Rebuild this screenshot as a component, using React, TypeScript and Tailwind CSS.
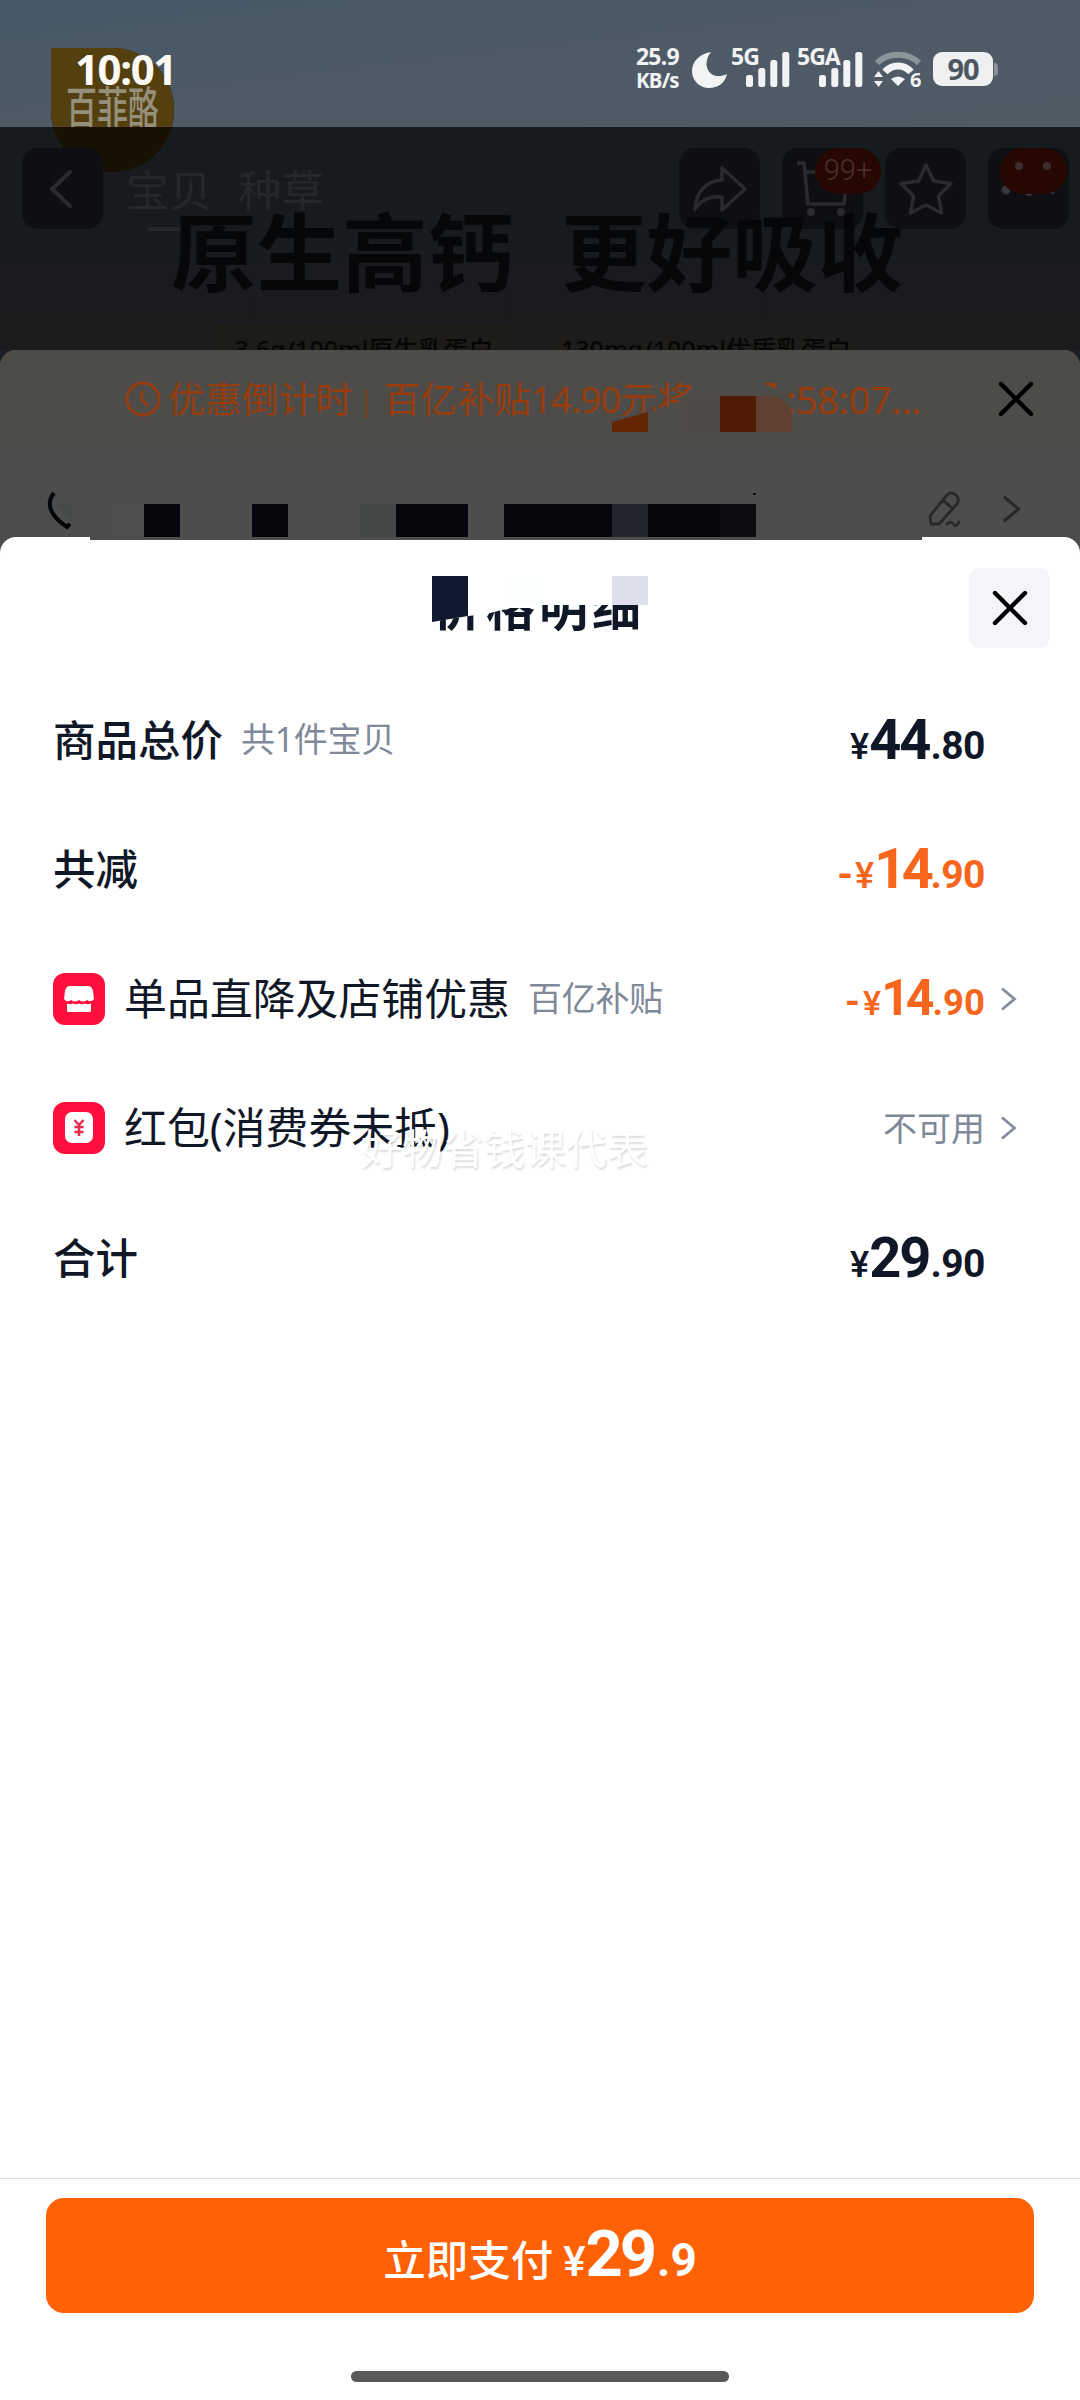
import type { ReactNode } from "react";

const cjk = "font-['Noto_Sans','Noto_Sans_CJK_SC',sans-serif]";
const num = "font-['Roboto','Noto_Sans_CJK_SC',sans-serif]";

function Chevron({ className }: { className?: string }) {
  return (
    <svg viewBox="0 0 16 24" className={className} fill="none" stroke="currentColor" strokeWidth="2.8">
      <path d="M1.5 1.5 14 12 1.5 22.5" />
    </svg>
  );
}

function Cross() {
  return (
    <svg viewBox="0 0 36 36" className="size-9" fill="none" stroke="#000" strokeWidth="4.4" strokeLinecap="round">
      <path d="M3 3 33 33M33 3 3 33" />
    </svg>
  );
}

function Signal() {
  return (
    <svg viewBox="0 0 44 36" className="h-9 w-11" fill="#f1f3f5">
      <rect x="0" y="24" width="7" height="12" rx="2.5" />
      <rect x="12.3" y="17" width="7" height="19" rx="2.5" />
      <rect x="24.3" y="9" width="7" height="27" rx="2.5" />
      <rect x="36.3" y="1" width="7" height="35" rx="2.5" />
    </svg>
  );
}

function StatusBar() {
  return (
    <div className="relative h-[127px] bg-linear-to-br from-[#455866] via-[#4e5a66] to-[#505b66] text-[#f1f3f5]">
      <div className={`${cjk} absolute top-[44px] left-[636px] text-[23px] leading-[24px] font-bold tracking-[-0.8px]`}>
        <div>25.9</div>
        <div className="text-[20.5px]">KB/s</div>
      </div>
      <svg viewBox="0 0 36 36" className="absolute top-[52px] left-[692px] size-[36px]" fill="currentColor">
        <path d="M19 0C7 2 0 10 0 19c0 10 8 17 17 17 9 0 16-5 18-14-8 4-16 2-19-4-3-6-1-13 3-18z" />
      </svg>
      <span className={`${cjk} absolute top-[44px] left-[731px] text-[23px] leading-6 font-bold tracking-[-1px]`}>5G</span>
      <div className="absolute top-[51px] left-[746px]">
        <Signal />
      </div>
      <span className={`${cjk} absolute top-[44px] left-[797px] text-[23px] leading-6 font-bold tracking-[-1px]`}>5GA</span>
      <div className="absolute top-[51px] left-[819px]">
        <Signal />
      </div>
      <svg viewBox="0 0 48 38" className="absolute top-[51px] left-[873px] h-[38px] w-12" fill="none">
        <path d="M4 12C15 1 35 1 46 12" stroke="#8b939b" strokeWidth="6" />
        <path d="M12 21C19 13 31 13 38 21" stroke="#f1f3f5" strokeWidth="7" />
        <path d="M18 28q7-5 14 0l-7 7zM1 26l4.500-6 4.500 6zM1 30l4.500 6 4.500-6z" fill="#f1f3f5" />
      </svg>
      <span className={`${cjk} absolute top-[70px] left-[910px] text-[20px] leading-5 font-bold`}>6</span>
      <div className={`${cjk} absolute top-[52px] left-[933px] flex h-[34px] w-[60px] items-center justify-center rounded-[9px] bg-[#eef0f1] text-[29px] font-bold tracking-[-1px] text-[#4c5761]`}>
        90
      </div>
      <div className="absolute top-[63px] left-[994px] h-[13px] w-[4px] rounded-r bg-[#8b939b]" />
    </div>
  );
}

function NavButton({ children }: { children?: ReactNode }) {
  return (
    <div className="relative flex h-[81px] w-[81px] items-center justify-center rounded-[16px] bg-[#0d0f12] text-[#2a2b2d]">
      {children}
    </div>
  );
}

function Hero() {
  return (
    <div className="relative h-[350px] overflow-hidden bg-linear-to-b from-[#161b1e] from-40% to-[#1b1b1d]">
      <StatusBar />

      {/* brand badge, split between the status bar and the dimmed area */}
      <div className="absolute top-[48px] left-[51px] h-[124px] w-[123px] overflow-hidden rounded-[62px] rounded-tl-none bg-[#181003]">
        <div className="h-[79px] bg-[#54400e]" />
      </div>
      <div className={`${cjk} absolute top-[80px] left-[66px] h-[47px] overflow-hidden text-[31px] leading-[38px] font-medium text-[#968f7c]`}>
        <span className="inline-block origin-top scale-y-[1.45]">百菲酪</span>
      </div>
      <div className={`${cjk} absolute top-[45px] left-[75px] text-[42px] leading-[48px] font-bold tracking-[-1.4px] text-[#fdfaf5]`}>
        10:01
      </div>

      <div className="relative flex items-start pt-[21px] pr-[11px] pl-[22px]">
        <NavButton>
          <svg viewBox="0 0 24 38" className="mr-1 h-[38px] w-6" fill="none" stroke="currentColor" strokeWidth="4" strokeLinecap="round">
            <path d="M21 2 3 19 21 36" />
          </svg>
        </NavButton>
        <div className={`${cjk} mt-[13px] ml-[23px] flex gap-[26px] text-[43px] leading-[60px] text-[#25272a]`}>
          <div className="flex flex-col items-center">
            <span>宝贝</span>
            <span className="mt-[6px] h-1 w-[42px] bg-[#25272a]" />
          </div>
          <span>种草</span>
        </div>
        <div className="ml-auto flex gap-[22px]">
          <NavButton>
            <svg viewBox="0 0 54 46" className="h-[46px] w-[54px]" fill="none" stroke="currentColor" strokeWidth="3.500" strokeLinejoin="round">
              <path d="M29 2 52 23 29 44V31C17 30 9 33 2 43 3 27 12 15 29 14Z" />
            </svg>
          </NavButton>
          <NavButton>
            <svg viewBox="0 0 52 56" className="h-[56px] w-[52px]" fill="none" stroke="currentColor" strokeWidth="3.500" strokeLinejoin="round">
              <path d="M0 2h7l4 41h36l4-32H8" />
              <circle cx="14" cy="51" r="4" fill="currentColor" stroke="none" />
              <circle cx="44" cy="51" r="4" fill="currentColor" stroke="none" />
            </svg>
            <span className={`${num} absolute top-0 left-[33px] flex h-[46px] w-[66px] items-center justify-center rounded-full bg-[#260701] text-[29px] font-light text-[#4a3029]`}>
              99+
            </span>
          </NavButton>
          <NavButton>
            <svg viewBox="0 0 54 52" className="h-[52px] w-[54px]" fill="none" stroke="currentColor" strokeWidth="3.500" strokeLinejoin="round">
              <path d="M27 2 34.500 18 52 20.500 39.500 33 42.500 50 27 42 11.500 50 14.500 33 2 20.500 19.500 18Z" />
            </svg>
          </NavButton>
          <NavButton>
            <svg viewBox="0 0 81 81" className="size-[81px]">
              <g fill="#34363a">
                <circle cx="18" cy="42" r="4.500" />
                <circle cx="41" cy="44" r="4" />
                <circle cx="64" cy="43" r="3" />
              </g>
              <rect x="12" y="0" width="67" height="46" rx="23" fill="#260701" />
              <circle cx="31" cy="18" r="4" fill="#3a2d2b" />
              <circle cx="59" cy="18" r="4" fill="#3a2d2b" />
            </svg>
          </NavButton>
        </div>
      </div>

      <div className={`${cjk} absolute top-[192px] left-[171px] flex gap-[48px] text-[85.500px] leading-[120px] font-bold whitespace-nowrap text-[#050708]`}>
        <span>原生高钙</span>
        <span>更好吸收</span>
      </div>
      <div className={`${cjk} absolute top-[323px] left-[216px] flex h-[27px] gap-[40px] overflow-hidden text-[25px] leading-[52px] font-medium whitespace-nowrap text-[#060606]`}>
        <div className="w-[296px] bg-[#1d1c18] text-center">3.6g/100ml原生乳蛋白</div>
        <div className="w-[308px] bg-[#1d1c1a] text-center">130mg/100ml优质乳蛋白</div>
      </div>
    </div>
  );
}

function OrderSheet() {
  return (
    <div className="h-[187px] bg-[#1b2026]">
      <div className="relative h-full overflow-hidden rounded-t-[16px] bg-[#4d4d4e]">
        <div className="flex h-[97px] items-start bg-[#4e4c49] pt-[31px] pr-[46px] pl-[125px] text-[#963c0d]">
          <svg viewBox="0 0 36 36" className="size-9" fill="none" stroke="currentColor" strokeWidth="2.800">
            <circle cx="18" cy="18" r="16" />
            <path d="M17 10v9l6 6" />
          </svg>
          <div className={`${cjk} ml-[7px] text-[36.900px] leading-[36px]`}>优惠倒计时</div>
          <div className="mt-[9px] ml-[13px] h-7 w-[2px] bg-[#7a3a1b]" />
          <div className={`${cjk} ml-[16px] text-[36.900px] leading-[36px] whitespace-nowrap`}>
            百亿补贴<span className="tracking-[-1px]">14.90</span>元将
          </div>
          <div className={`${cjk} ml-auto text-[38.500px] leading-[36px] tracking-[-0.500px]`}>:58:07...</div>
          <div className="ml-[77px]">
            <Cross />
          </div>
        </div>
        <div className="ml-[57px] h-[20px] w-[733px] rounded-b-lg bg-[#4e4c4a]" />

        {/* blurred-out part of the countdown */}
        <svg viewBox="0 0 240 70" className="absolute top-[31px] left-[600px] h-[70px] w-[240px]">
          <path d="M60 29 80 20 96 10V0H162V51H0V45L48 30Z" fill="#4e4c49" />
          <path d="M12 41 48 31V51H12Z" fill="#632504" />
          <rect x="84" y="15" width="36" height="36" fill="#504a47" />
          <rect x="120" y="15" width="36" height="36" fill="#511c06" />
          <path d="M156 15h20q12 4 16 18v18h-36z" fill="#5f4032" />
          <path d="M163 2h13v6z" fill="#963c0d" />
        </svg>

        {/* masked address */}
        <svg viewBox="0 0 760 60" className="absolute top-[135px] left-0 h-[60px] w-[760px]">
          <path d="M57 19h15v19z" fill="#474b48" />
          <path d="M54 8C46 18 49 30 67 42l3-3" fill="none" stroke="#020508" strokeWidth="4" />
          <rect x="112" y="19" width="32" height="36" fill="#4c4e50" />
          <g fill="#04060c">
            <rect x="144" y="19" width="36" height="36" />
            <rect x="252" y="19" width="36" height="36" />
            <rect x="396" y="19" width="72" height="36" />
            <rect x="504" y="19" width="108" height="36" />
            <rect x="648" y="19" width="72" height="36" />
          </g>
          <rect x="360" y="19" width="36" height="36" fill="#434748" />
          <rect x="612" y="19" width="36" height="36" fill="#22262c" />
          <rect x="720" y="19" width="36" height="36" fill="#0b0d11" />
          <rect x="753" y="8" width="3" height="2" fill="#111" />
        </svg>
        <div className="absolute top-[141px] left-[928px] flex items-center text-[#26282b]">
          <svg viewBox="0 0 33 36" className="h-9 w-[33px]" fill="none" stroke="currentColor" strokeWidth="2.800" strokeLinejoin="round" strokeLinecap="round">
            <path d="M2 25 19 4q4-4 9 0 4 4 1 9L11 33H3ZM15 9l10 9M19 33q3-4 6 0t6-2" />
          </svg>
          <Chevron className="ml-[41px] h-[28px] w-[19px]" />
        </div>
      </div>
    </div>
  );
}

interface PriceProps {
  sign?: string;
  whole: string;
  cents: string;
  small?: boolean;
  className?: string;
}

function Price({ sign, whole, cents, small, className = "" }: PriceProps) {
  return (
    <div className={`${num} flex items-baseline font-bold ${className}`}>
      {sign && <span className={small ? "mr-[3px] text-[38px]" : "mr-[2px] text-[40px]"}>{sign}</span>}
      <span className={small ? "text-[34px] font-medium" : "text-[36px] font-medium"}>¥</span>
      <span className={small ? "text-[50px] tracking-[-4px]" : sign ? "text-[56px] tracking-[-4.500px]" : "text-[56px] tracking-[-2px]"}>
        {whole}
      </span>
      <span className={small ? "ml-[2px] text-[36.500px]" : "ml-[1px] text-[39px] tracking-[-0.500px]"}>{cents}</span>
    </div>
  );
}

interface RowProps {
  icon?: ReactNode;
  label: string;
  note?: string;
  more?: boolean;
  children: ReactNode;
}

function Row({ icon, label, note, more, children }: RowProps) {
  return (
    <div className={`${cjk} flex h-[129.500px] items-center pl-[53px] text-[#101828]`}>
      {icon && <div className="mr-[19px] size-[52px]">{icon}</div>}
      <span className={icon ? "text-[42.900px]" : "text-[42.500px] font-medium"}>{label}</span>
      {note && <span className="ml-[18px] text-[34px] tracking-[-0.300px] text-[#7f8999]">{note}</span>}
      <div className="ml-auto">{children}</div>
      <div className="w-[95px] pl-[15px] text-[#868d9a]">{more && <Chevron className="h-[24px] w-[17px]" />}</div>
    </div>
  );
}

const shopIcon = (
  <svg viewBox="0 0 52 52">
    <rect width="52" height="52" rx="12" fill="#ff0f3c" />
    <path d="M17 13h18q4 0 5 5l1 8q-3 4-7 1-4 3-8 0-4 3-8 0-4 3-7-1l1-8q1-5 5-5Z" fill="#fff" />
    <path d="M14 30.500q3 1.500 6 0 3 1.500 6 0 3 1.500 6 0 3 1.500 6 0v7q0 1.500-1.500 1.500h-21q-1.500 0-1.500-1.500Z" fill="#fff" />
  </svg>
);

const packetIcon = (
  <svg viewBox="0 0 52 52">
    <rect width="52" height="52" rx="12" fill="#ff0f3c" />
    <rect x="12" y="10" width="28" height="31" rx="7" fill="#fff" />
    <path d="M21.500 18l4.500 5 4.500-5M26 23v11M21.500 25h9M21.500 30h9" fill="none" stroke="#e62c50" strokeWidth="2.500" />
  </svg>
);

function PriceSheet() {
  return (
    <div className="flex flex-1 flex-col bg-[#4d4d4e]">
      <div className="relative flex flex-1 flex-col rounded-t-[16px] bg-white">
        <div className="absolute top-0 left-[90px] h-[3px] w-[832px] bg-[#4d4d4e]" />
        <div className="relative flex h-[138px] items-start justify-end pt-[31px] pr-[30px]">
          <div className={`${cjk} absolute top-[35px] left-[433px] text-[49px] leading-[70px] font-bold tracking-[4px] text-[#101828]`}>
            价格明细
          </div>
          <svg viewBox="0 0 220 60" className="absolute top-[37px] left-[430px] h-[60px] w-[220px]">
            <path d="M0 0H220V31H112V34H80L60 39 52 40 0 48Z" fill="#fff" />
            <path d="M2 2h36v40L2 48Z" fill="#10192e" />
            <rect x="80" y="2" width="34" height="28" fill="#fafeff" />
            <rect x="182" y="2" width="36" height="29" fill="#dde0ec" />
          </svg>
          <button className="flex h-[80px] w-[81px] items-center justify-center rounded-[11px] bg-[#f3f5f9]">
            <Cross />
          </button>
        </div>

        <div className="relative">
          <Row label="商品总价" note="共1件宝贝">
            <Price whole="44" cents=".80" />
          </Row>
          <Row label="共减">
            <Price sign="-" whole="14" cents=".90" className="text-[#f8651c]" />
          </Row>
          <Row icon={shopIcon} label="单品直降及店铺优惠" note="百亿补贴" more>
            <Price sign="-" whole="14" cents=".90" small className="text-[#f8651c]" />
          </Row>
          <Row icon={packetIcon} label="红包(消费券未抵)" more>
            <span className="text-[34px] text-[#7f8999]">不可用</span>
          </Row>
          <Row label="合计">
            <Price whole="29" cents=".90" />
          </Row>
          <div className={`${cjk} absolute top-[443px] left-[361px] text-[41px] leading-[60px] text-white [text-shadow:1px_2px_2px_#00000024]`}>
            好物省钱课代表
          </div>
        </div>

        <div className="mt-auto h-[222px] border-t border-[#dedede] px-[46px] pt-[19px]">
          <button className={`${cjk} flex h-[115px] w-full items-baseline justify-center rounded-[18px] bg-[#ff6104] text-[42.500px] leading-[113px] font-medium text-white`}>
            立即支付
            <span className={`${num} ml-[10px] flex items-baseline font-bold`}>
              <span className="text-[42px] font-medium">¥</span>
              <span className="text-[65px] tracking-[-3px]">29</span>
              <span className="ml-[3px] text-[46px]">.9</span>
            </span>
          </button>
          <div className="mx-auto mt-[58px] h-[11px] w-[378px] rounded-full bg-[#595959]" />
        </div>
      </div>
    </div>
  );
}

export default function App() {
  return (
    <div className="flex h-[2400px] w-[1080px] flex-col overflow-hidden bg-white">
      <Hero />
      <OrderSheet />
      <PriceSheet />
    </div>
  );
}
